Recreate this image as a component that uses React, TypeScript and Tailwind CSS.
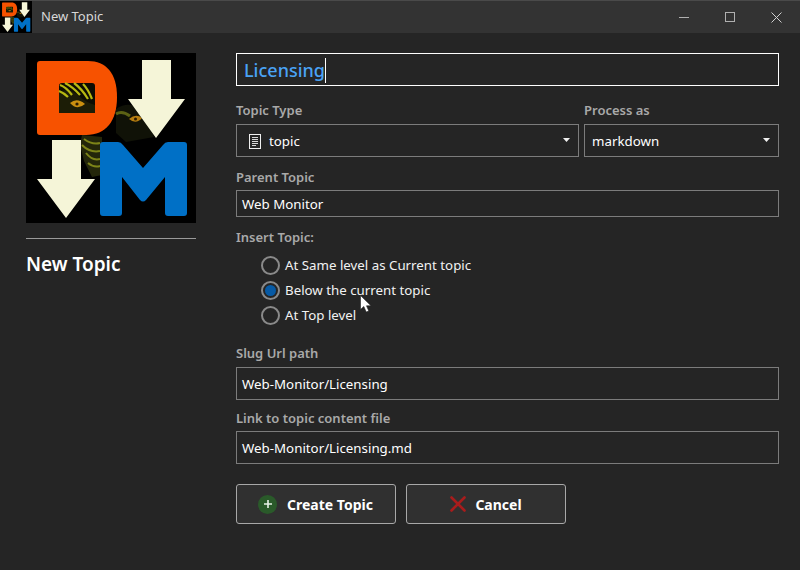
const Logo = ({ className }: { className: string }) => (
  <svg viewBox="0 0 170 170" className={className}>
    <rect width="170" height="170" fill="#000" />
    {/* creature behind the letters */}
    <path d="M56 82 L76 84 L76 122 L66 124 L58 108 L54 92 Z" fill="#23260a" />
    <path d="M58 86 Q66 92 74 90 M56 92 Q64 100 74 98 M60 100 Q66 108 74 106 M62 110 Q68 115 74 113" stroke="#7d8418" strokeWidth="2" fill="none" />
    <path d="M90 56 Q105 46 120 60 L128 84 L100 89 L90 80 Z" fill="#101207" />
    <path d="M90 61 Q96 57 104 63" stroke="#5c6214" strokeWidth="3" fill="none" />
    <path d="M112 60 Q118 62 122 68" stroke="#2c3010" strokeWidth="2" fill="none" />
    <path d="M103 66 Q110 60 116 65 Q110 72 103 66 Z" fill="#b57d10" />
    <circle cx="109.500" cy="66" r="1.5" fill="#2a1a00" />
    <path d="M14 8 H62 C80 8 91 20 91 44 C91 68 80 82 60 82 H14 Q11 82 11 79 V11 Q11 8 14 8 Z" fill="#f75200" />
    <rect x="33" y="30" width="36" height="30" rx="3" fill="#0d0d03" />
    <path d="M33 39 Q44 34 54 44 Q60 49 69 52 L69 60 H33 Z" fill="#1c1d06" />
    <path d="M34 32 Q40 34 46 42 M39 30 Q47 34 54 42 M48 30 Q56 36 62 46 M57 31 Q62 36 66 46 M33 38 Q38 40 42 44" stroke="#b6b812" strokeWidth="2.2" fill="none" />
    <path d="M44 50 Q51 44 59 51 Q51 58 44 50 Z" fill="#c98f10" />
    <circle cx="51" cy="51" r="1.6" fill="#2a1a00" />
    <path d="M116 7 H145 V46 H159 L130 85 L102 46 H116 Z" fill="#f5f5d8" />
    <path d="M26 87 H55 V126 H69 L40 165 L11 126 H26 Z" fill="#f5f5d8" />
    <path d="M77 89 H92 Q95 89 97 92 L117 115 L137 92 Q139 89 142 89 H158 Q161 89 161 92 V160 Q161 163 158 163 H142 Q139 163 139 160 V124 L120 147 Q117 150 114 147 L96 124 V160 Q96 163 93 163 H77 Q74 163 74 160 V92 Q74 89 77 89 Z" fill="#0070c6" />
  </svg>
);

const Label = ({ children }: { children: string }) => (
  <div className="text-[13px] leading-[19px] font-semibold text-[#a9a9a9]">{children}</div>
);

const Field = ({ label, value, className }: { label: string; value: string; className: string }) => (
  <div className={className}>
    <Label>{label}</Label>
    <div className="h-[33px] border border-[#7c7c7c] px-[5px] pt-[2px] flex items-center text-[13.3px] text-white">
      {value}
    </div>
  </div>
);

const Radio = ({ label, checked }: { label: string; checked?: boolean }) => (
  <div className="flex items-center h-[25px] pl-[25px] gap-[5px] text-[13.3px] text-[#f2f2f2]">
    <span className="w-[19px] h-[19px] rounded-full border-2 border-[#8a8a8a] flex items-center justify-center">
      {checked && <span className="w-[11px] h-[11px] rounded-full bg-[#075aa5]" />}
    </span>
    {label}
  </div>
);

const Caret = () => (
  <svg viewBox="0 0 7 4" className="w-[7px] h-[4px] absolute right-[8px] top-[13px]">
    <path d="M0 0 H7 L3.5 4 Z" fill="#f0f0f0" />
  </svg>
);

export default function App() {
  return (
    <div className="relative w-[800px] h-[570px] overflow-hidden bg-[#252525] font-['Noto_Sans','Open_Sans',sans-serif]">
      {/* title bar */}
      <div className="h-[33px] bg-[#333333] border-t border-[#4a4a4a] flex items-center">
        <Logo className="w-[32px] h-[32px]" />
        <span className="ml-[9px] text-[13px] text-[#d8d8d8]">New Topic</span>
        <div className="ml-auto mr-px flex items-center">
          <div className="w-[46px] h-[32px] flex items-center justify-center">
            <span className="w-[10px] h-px bg-[#b0b0b0]" />
          </div>
          <div className="w-[46px] h-[32px] flex items-center justify-center">
            <span className="w-[10px] h-[10px] border border-[#b0b0b0]" />
          </div>
          <div className="w-[46px] h-[32px] flex items-center justify-center">
            <svg viewBox="0 0 11 11" className="w-[11px] h-[11px]">
              <path d="M0.5 0.5 L10.5 10.5 M10.5 0.5 L0.5 10.5" stroke="#d0d0d0" strokeWidth="1" />
            </svg>
          </div>
        </div>
      </div>

      <div className="flex pl-[26px] pt-[20px]">
        {/* left column */}
        <div className="w-[170px]">
          <Logo className="w-[170px] h-[170px]" />
          <div className="mt-[15px] h-px bg-[#9a9a9a]" />
          <h1 className="mt-[11px] text-[19px] leading-[28px] font-semibold text-white">New Topic</h1>
        </div>

        {/* form */}
        <div className="ml-[40px] w-[543px]">
          <div className="h-[33px] border border-white pl-[7px] pt-px flex items-center text-[18px] font-medium text-[#4aa3f5]">
            Licensing
            <span className="w-px h-[25px] bg-white" />
          </div>

          <div className="mt-[15px] flex gap-[5px]">
            <div className="w-[343px]">
              <Label>Topic Type</Label>
              <div className="relative mt-[4px] h-[33px] border border-[#7c7c7c] pl-[12px] pt-[2px] flex items-center gap-[8px] text-[13.3px] text-white">
                <svg viewBox="0 0 12 15" className="w-[12px] h-[15px]">
                  <rect x="0.5" y="0.5" width="11" height="14" fill="none" stroke="#f0f0f0" />
                  <path d="M3 3.500 H9 M3 5.500 H9 M3 7.500 H9 M3 9.500 H9 M3 11.500 H7" stroke="#d8d8d8" />
                </svg>
                topic
                <Caret />
              </div>
            </div>
            <div className="w-[195px]">
              <Label>Process as</Label>
              <div className="relative mt-[4px] h-[33px] border border-[#7c7c7c] pl-[7px] pt-[2px] flex items-center text-[13.3px] text-white">
                markdown
                <Caret />
              </div>
            </div>
          </div>

          <div className="mt-[11px]">
            <Label>Parent Topic</Label>
            <div className="mt-[3px] h-[27px] border border-[#7c7c7c] px-[5px] pt-[2px] flex items-center text-[13.3px] text-white">
              Web Monitor
            </div>
          </div>

          <div className="mt-[11px]">
            <Label>Insert Topic:</Label>
          </div>
          <div className="mt-[6px]">
            <Radio label="At Same level as Current topic" />
            <Radio label="Below the current topic" checked />
            <Radio label="At Top level" />
          </div>

          <Field label="Slug Url path" value="Web-Monitor/Licensing" className="mt-[16px] flex flex-col gap-[4px]" />
          <Field label="Link to topic content file" value="Web-Monitor/Licensing.md" className="mt-[9px] flex flex-col gap-[3px]" />

          <div className="mt-[20px] flex gap-[10px]">
            <button className="w-[160px] h-[40px] pr-px rounded-[3px] border border-[#a8a8a8] bg-[#303030] flex items-center justify-center gap-[10px] text-[14px] font-bold text-white">
              <span className="w-[19px] h-[19px] rounded-full bg-[#2a5a2a] flex items-center justify-center">
                <svg viewBox="0 0 8 8" className="w-[8px] h-[8px]">
                  <path d="M4 0 V8 M0 4 H8" stroke="#e8f2e8" strokeWidth="1.6" />
                </svg>
              </span>
              Create Topic
            </button>
            <button className="w-[160px] h-[40px] rounded-[3px] border border-[#a8a8a8] bg-[#303030] flex items-center justify-center gap-[9px] text-[14px] font-bold text-white">
              <svg viewBox="0 0 16 16" className="w-[16px] h-[16px]">
                <path d="M1.500 1.500 L14.500 14.500 M14.500 1.500 L1.500 14.500" stroke="#a81c1c" strokeWidth="2.6" strokeLinecap="round" />
              </svg>
              Cancel
            </button>
          </div>
        </div>
      </div>

      {/* mouse pointer */}
      <svg viewBox="0 0 12 18" className="absolute left-[360px] top-[295px] w-[12px] h-[18px]">
        <path d="M0.500 0.500 V14.500 L3.800 11.500 L6.200 17 L8.800 16 L6.500 10.800 L11 10.800 Z" fill="#fff" stroke="#222" strokeWidth="0.6" />
      </svg>
    </div>
  );
}
